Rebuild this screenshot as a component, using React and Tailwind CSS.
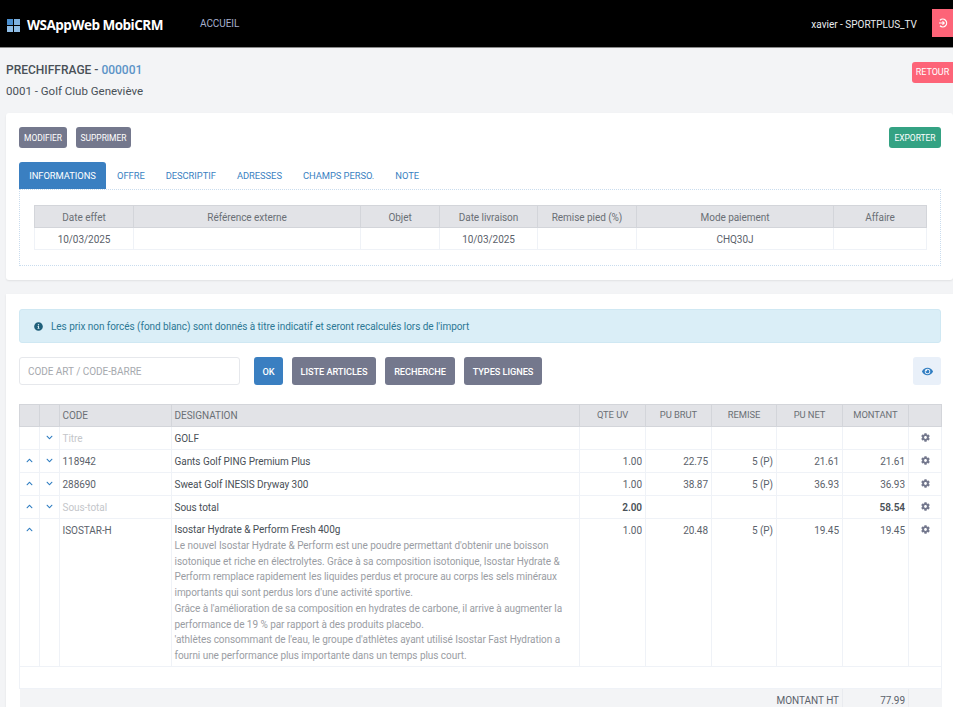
import React from "react";
import { FaCog, FaEye, FaInfoCircle, FaChevronUp, FaChevronDown } from "react-icons/fa";

const topCols = [99, 227, 79, 98, 99, 197, 93];
const topHead = ["Date effet", "Référence externe", "Objet", "Date livraison", "Remise pied (%)", "Mode paiement", "Affaire"];
const topRow = ["10/03/2025", "", "", "10/03/2025", "", "CHQ30J", ""];
const heads = ["", "", "CODE", "DESIGNATION", "QTE UV", "PU BRUT", "REMISE", "PU NET", "MONTANT", ""];
const rows = [
  { down: true, code: "Titre", muted: true, des: "GOLF" },
  { up: true, down: true, code: "118942", des: "Gants Golf PING Premium Plus", v: ["1.00", "22.75", "5 (P)", "21.61", "21.61"] },
  { up: true, down: true, code: "288690", des: "Sweat Golf INESIS Dryway 300", v: ["1.00", "38.87", "5 (P)", "36.93", "36.93"] },
  { up: true, down: true, code: "Sous-total", muted: true, des: "Sous total", bold: true, v: ["2.00", "", "", "", "58.54"] },
];
const desc = [
  "Le nouvel Isostar Hydrate & Perform est une poudre permettant d'obtenir une boisson isotonique et riche en électrolytes. Grâce à sa composition isotonique, Isostar Hydrate & Perform remplace rapidement les liquides perdus et procure au corps les sels minéraux importants qui sont perdus lors d'une activité sportive.",
  "Grâce à l'amélioration de sa composition en hydrates de carbone, il arrive à augmenter la performance de 19 % par rapport à des produits placebo.",
  "'athlètes consommant de l'eau, le groupe d'athlètes ayant utilisé Isostar Fast Hydration a fourni une performance plus importante dans un temps plus court.",
];
const Grey = ({ children, className = "" }) => (
  <button className={`bg-[#74788d] text-white rounded-[3px] ${className}`}>{children}</button>
);
const Td = ({ children, className = "" }) => (
  <td className={`border border-[#eff2f7] px-[2.5px] align-top ${className}`}>{children}</td>
);
const Up = () => <FaChevronUp className="mx-auto mt-[7px] text-[#2f7dc1]" size={7} />;
const Down = () => <FaChevronDown className="mx-auto mt-[7px] text-[#2f7dc1]" size={7} />;
const Cog = () => <FaCog className="mx-auto mt-[6px] text-[#74788d]" size={9} />;

function Values({ v, bold }) {
  return [0, 1, 2, 3, 4].map((i) => (
    <Td key={i} className={`text-right pt-[4px] pr-[3px] ${bold ? "font-semibold text-[#495057]" : ""}`}>{v ? v[i] : ""}</Td>
  ));
}

export default function App() {
  return (
    <div className="h-[707px] overflow-hidden bg-[#f3f4f6] font-['Roboto',sans-serif] text-[10px] tracking-[-0.05px] text-[#5b626b]">
      <header className="h-[48px] bg-black border-b border-[#8a8a8a] flex items-start text-white">
        <div className="flex items-center pl-[7px] pt-[17px]">
          <svg width="13" height="13" viewBox="0 0 13 13" className="mr-[7px]">
            <rect x="0" y="0" width="6" height="6" fill="#4a8fd0" />
            <rect x="7" y="0" width="6" height="6" fill="#7fb2e0" />
            <rect x="0" y="7" width="6" height="6" fill="#8fbde6" />
            <rect x="7" y="7" width="6" height="6" fill="#8fbde6" />
          </svg>
          <span className="font-['Open_Sans',sans-serif] font-bold text-[13.5px] leading-[16px] tracking-[-0.5px]">WSAppWeb MobiCRM</span>
        </div>
        <span className="ml-[37px] mt-[16px] text-[10px] text-[#a6b0cf]">ACCUEIL</span>
        <span className="ml-auto mt-[17px] mr-[15px] text-[10px] tracking-normal text-[#e9ecef]">xavier - SPORTPLUS_TV</span>
        <button className="w-[21px] h-[28px] mt-[9px] bg-[#fd6478] flex items-center justify-center">
          <svg width="10" height="10" viewBox="0 0 10 10" fill="none" stroke="currentColor" strokeWidth="1.2">
            <path d="M2 2.2A3.9 3.9 0 1 1 2 7.8" />
            <path d="M1 5h5M4.5 3.4 6.2 5 4.5 6.6" />
          </svg>
        </button>
      </header>

      <div className="h-[65px] pl-[6px] pt-[14px] flex justify-between">
        <div>
          <div className="text-[12px] leading-[16px] font-medium tracking-normal text-[#495057]">PRECHIFFRAGE - <span className="text-[#5b93c7]">000001</span></div>
          <div className="mt-[6px] text-[11.5px] leading-[14px] tracking-normal text-[#495057]">0001 - Golf Club Geneviève</div>
        </div>
        <button className="h-[21px] w-[41px] bg-[#fd6478] text-white text-[9px] rounded-l-[3px]">RETOUR</button>
      </div>

      <section className="ml-[6px] h-[167px] bg-white rounded-[3px] shadow-[0_1px_2px_rgba(0,0,0,0.08)] px-[13px] pt-[14px]">
        <div className="flex gap-[9px]">
          <Grey className="h-[21px] w-[48px] pt-[1px] text-[8.5px]">MODIFIER</Grey>
          <Grey className="h-[21px] w-[55px] pt-[1px] text-[8.5px]">SUPPRIMER</Grey>
          <button className="ml-auto mr-[-1px] h-[21px] w-[52px] pt-[1px] bg-[#34a283] text-white text-[8.5px] rounded-[3px]">EXPORTER</button>
        </div>
        <div className="mt-[14px] flex items-center h-[27px] text-[9.4px] text-[#3a7fc1]">
          <button className="w-[87px] h-[27px] pt-[1px] bg-[#3a7fc1] text-white rounded-t-[3px]">INFORMATIONS</button>
          <span className="ml-[11px] pt-[1px]">OFFRE</span>
          <span className="ml-[21px] pt-[1px]">DESCRIPTIF</span>
          <span className="ml-[21px] pt-[1px]">ADRESSES</span>
          <span className="ml-[21px] pt-[1px]">CHAMPS PERSO.</span>
          <span className="ml-[21px] pt-[1px]">NOTE</span>
        </div>
        <div className="mr-[-1px] h-[77px] border border-dotted border-[#c9dcee] px-[14px] pt-[15px]">
          <table className="table-fixed border-collapse w-[892px] text-center">
            <colgroup>{topCols.map((w, i) => <col key={i} style={{ width: w }} />)}</colgroup>
            <thead>
              <tr className="h-[22px] bg-[#e2e3e7] text-[#6a6f75]">
                {topHead.map((h) => <th key={h} className="border border-[#d3d5da] font-normal pt-[1px]">{h}</th>)}
              </tr>
            </thead>
            <tbody>
              <tr className="h-[22px]">
                {topRow.map((c, i) => <td key={i} className="border border-[#eff2f7] pt-[1px]">{c}</td>)}
              </tr>
            </tbody>
          </table>
        </div>
      </section>

      <section className="ml-[6px] mt-[14px] h-[420px] bg-white px-[13px] pt-[15px] shadow-[0_1px_2px_rgba(0,0,0,0.08)]">
        <div className="mr-[-1px] h-[34px] bg-[#daeef7] border border-[#cfe8f3] rounded-[3px] flex items-center pl-[14px] text-[#2c7895]">
          <FaInfoCircle size={9} className="text-[#1f5f7a] mr-[8px]" />
          <span>Les prix non forcés (fond blanc) sont donnés à titre indicatif et seront recalculés lors de l'import</span>
        </div>
        <div className="mt-[14px] flex">
          <input readOnly placeholder="CODE ART / CODE-BARRE" className="w-[221px] h-[28px] border border-[#e6e8ec] rounded-[3px] pl-[8px] pt-[1px] text-[10px] placeholder:text-[#a6a9ae]" />
          <button className="ml-[14px] w-[29px] h-[28px] pt-[1px] bg-[#3a7fc1] text-white text-[9.2px] font-medium rounded-[3px]">OK</button>
          <Grey className="ml-[9px] w-[84px] h-[28px] pt-[1px] text-[9.2px] font-medium">LISTE ARTICLES</Grey>
          <Grey className="ml-[9px] w-[70px] h-[28px] pt-[1px] text-[9.2px] font-medium">RECHERCHE</Grey>
          <Grey className="ml-[9px] w-[78px] h-[28px] pt-[1px] text-[9.2px] font-medium">TYPES LIGNES</Grey>
          <button className="ml-auto mr-[-1px] w-[28px] h-[28px] bg-[#e9f0f9] rounded-[3px] flex items-center justify-center">
            <FaEye size={11} className="text-[#2f7dc1]" />
          </button>
        </div>
        <table className="mt-[19px] table-fixed border-collapse w-[922px]">
          <colgroup>{[20, 20, 112, 408, 66, 66, 65, 66, 66, 33].map((w, i) => <col key={i} style={{ width: w }} />)}</colgroup>
          <thead>
            <tr className="h-[22px] bg-[#e2e3e7] text-[#6a6f75]">
              {heads.map((h, i) => (
                <th key={i} className={`border border-[#d3d5da] font-normal ${i < 4 ? "text-left px-[2.5px]" : "text-center text-[9.4px]"}`}>{h}</th>
              ))}
            </tr>
          </thead>
          <tbody>
            {rows.map((r) => (
              <tr key={r.code} className="h-[23px]">
                <Td>{r.up && <Up />}</Td>
                <Td>{r.down && <Down />}</Td>
                <Td className={`pt-[4px] ${r.muted ? "text-[#c4c6ca]" : ""}`}>{r.code}</Td>
                <Td className="pt-[4px] text-[#495057]">{r.des}</Td>
                <Values v={r.v} bold={r.bold} />
                <Td><Cog /></Td>
              </tr>
            ))}
            <tr className="h-[148px]">
              <Td><Up /></Td>
              <Td />
              <Td className="pt-[4px]">ISOSTAR-H</Td>
              <Td className="pt-[4px] leading-[15.7px]">
                <div className="text-[#495057] leading-[14px]">Isostar Hydrate & Perform Fresh 400g</div>
                <div className="mt-[1px] text-[#9a9da3]">
                  {desc.map((d) => <div key={d}>{d}</div>)}
                </div>
              </Td>
              <Values v={["1.00", "20.48", "5 (P)", "19.45", "19.45"]} />
              <Td><Cog /></Td>
            </tr>
            <tr className="h-[22px]"><td colSpan={10} className="border border-[#eff2f7]" /></tr>
            <tr className="h-[20px] bg-[#f3f4f6]">
              <td colSpan={8} className="text-right pr-[3px] pt-[4px] border-b border-[#eff2f7]">MONTANT HT</td>
              <td className="text-right pr-[3px] pt-[4px] border-l border-r border-[#e9ebef]">77.99</td>
              <td />
            </tr>
          </tbody>
        </table>
      </section>
    </div>
  );
}
